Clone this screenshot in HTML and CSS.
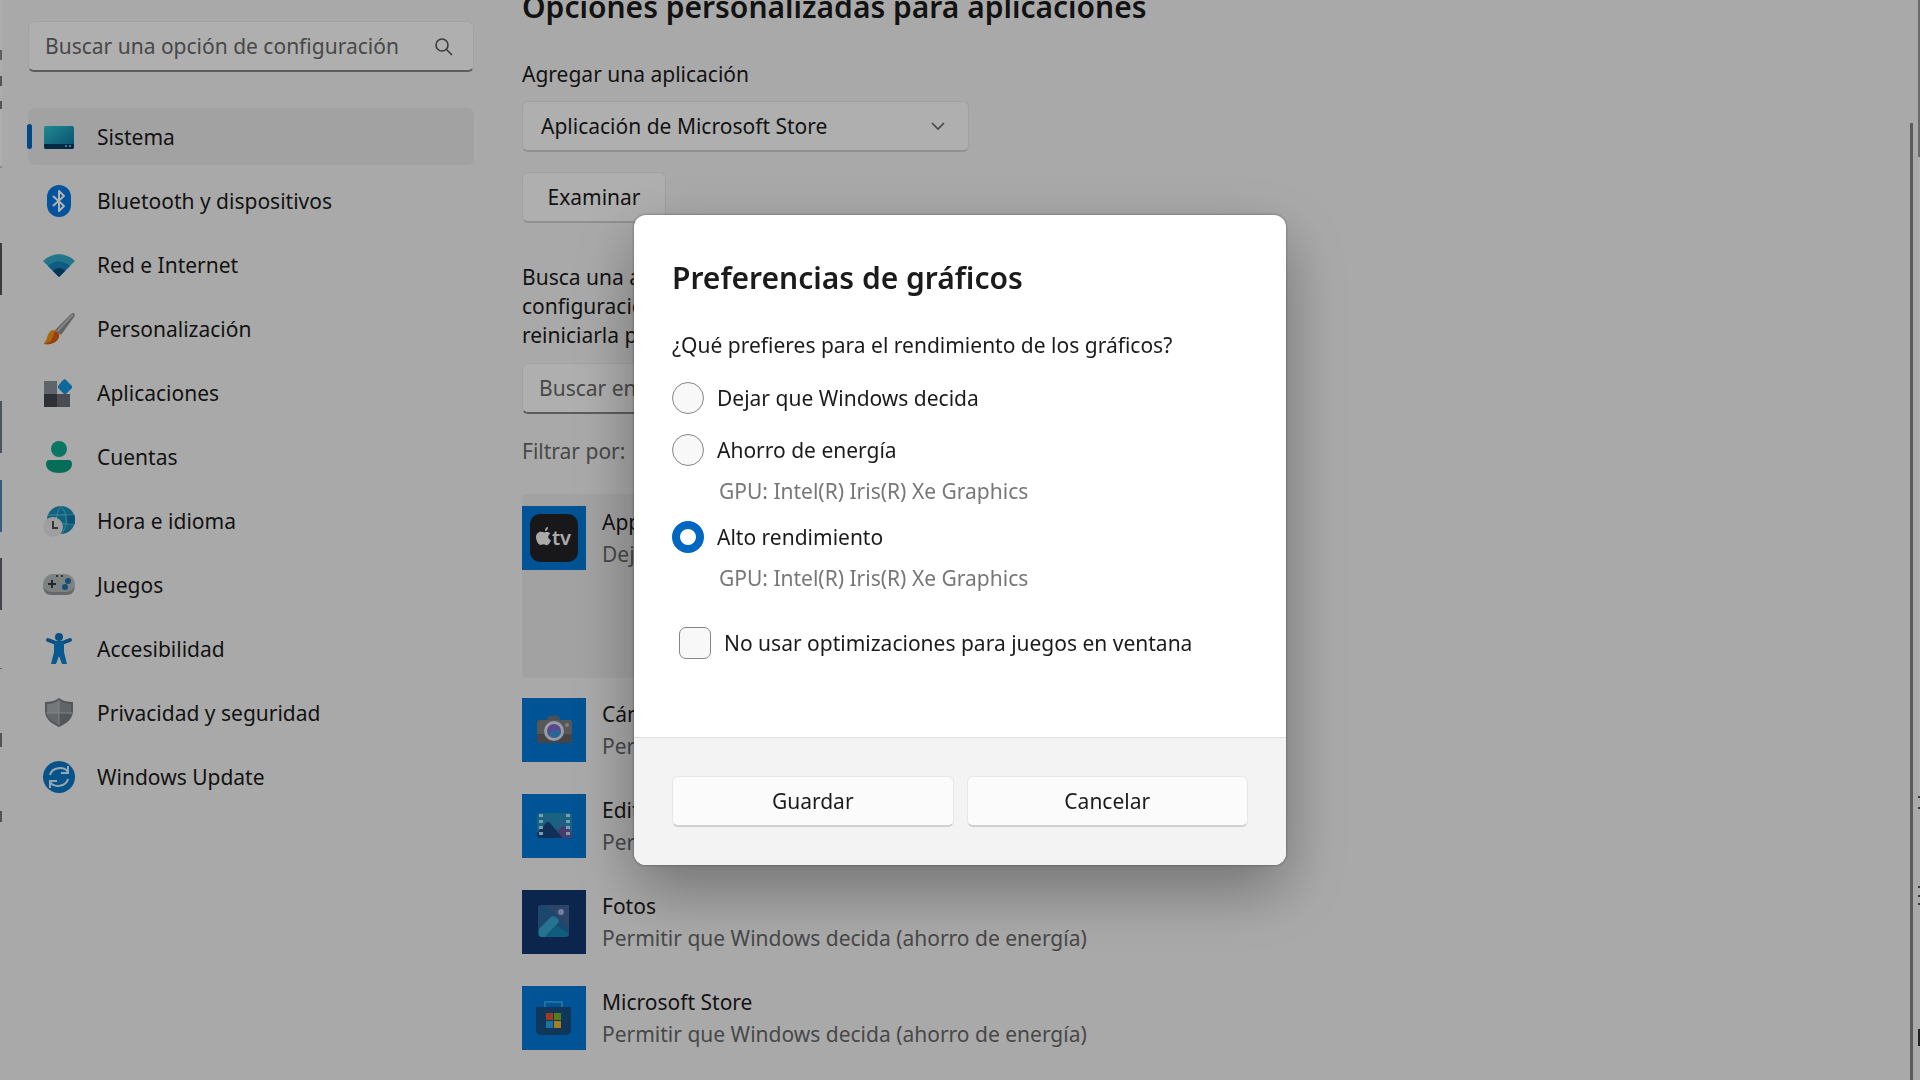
FILE: index.html
```html
<!DOCTYPE html>
<html lang="es">
<head>
<meta charset="utf-8">
<meta name="viewport" content="width=device-width, initial-scale=1">
<title>Configuración</title>
<link rel="stylesheet" href="styles.css">
</head>
<body>
<div class="window">
  <div class="edge edge-left"></div>
  <aside class="sidebar">
    <form class="search">
      <input class="search-input" type="search" aria-label="Buscar" placeholder="Buscar una opción de configuración">
      <svg class="search-icon" viewBox="0 0 20 20" fill="none" stroke="#555" stroke-width="1.600"><circle cx="8" cy="8" r="6"/><path d="M12.500 12.500 18 18"/></svg>
    </form>
    <nav class="nav">
      <a class="nav-item active" href="#"><svg class="icon" viewBox="0 0 32 32"><defs><linearGradient id="sys" x1="0" y1="0" x2="1" y2="1"><stop stop-color="#31c5cf"/><stop offset="1" stop-color="#086f9f"/></linearGradient></defs><rect x="1" y="5" width="30" height="23" rx="2" fill="url(#sys)"/><path d="M1 23h30v3a2 2 0 0 1-2 2H3a2 2 0 0 1-2-2z" fill="#063c64"/><path d="M22 25h2M26 25h2" stroke="#8cc9e8" stroke-width="1.500"/></svg>Sistema</a>
      <a class="nav-item" href="#"><svg class="icon" viewBox="0 0 32 32"><rect x="4" y="0" width="24" height="32" rx="12" fill="#0078e0"/><path d="M10 11l11 10-5 5V6l5 5-11 10" fill="none" stroke="#fff" stroke-width="2" stroke-linejoin="round"/></svg>Bluetooth y dispositivos</a>
      <a class="nav-item" href="#"><svg class="icon" viewBox="0 0 32 32"><path d="M0 12C9 3 23 3 32 12L16 28z" fill="#31a9c8"/><path d="M5 17C11 11 21 11 27 17L16 28z" fill="#1583bc"/><path d="M10 22C13 18 19 18 22 22L16 28z" fill="#074c7d"/></svg>Red e Internet</a>
      <a class="nav-item" href="#"><svg class="icon" viewBox="0 0 32 32"><path d="M30 0c2 0 2 2 1 4L18 22l-6-5L27 2c1-1 2-2 3-2z" fill="#8b8d8f"/><path d="M29 1 13 18l2 1L31 2z" fill="#b9bbbc"/><path d="M10 17c3 0 7 3 6 7-2 6-9 8-15 7 0-2 2-3 3-6 1-4 2-7 6-8z" fill="#ef9619"/><path d="M12 18 8 28 1 31c6 1 13-1 15-7 1-3-1-5-4-6z" fill="#d95b13"/></svg>Personalización</a>
      <a class="nav-item" href="#"><svg class="icon" viewBox="0 0 32 32"><path d="M1 4h13v13H1z" fill="#8a9097"/><path d="M1 17h13v13H1z" fill="#41464b"/><path d="M14 17h13v13H14z" fill="#686e77"/><path d="m20 3 2-1 7 7v2l-6 6h-2l-6-6V9z" fill="#1595dc"/></svg>Aplicaciones</a>
      <a class="nav-item" href="#"><svg class="icon" viewBox="0 0 32 32"><circle cx="16" cy="8" r="8" fill="#12a990"/><path d="M6 19h20c2 0 3 2 3 4 0 6-6 9-13 9S3 29 3 23c0-2 1-4 3-4z" fill="#0a9d80"/></svg>Cuentas</a>
      <a class="nav-item" href="#"><svg class="icon" viewBox="0 0 32 32"><circle cx="18" cy="15" r="14" fill="#168fb6"/><path d="M18 1c-6 7-6 20 0 28M18 1c7 8 7 21 0 28M5 10h26M5 19h27" fill="none" stroke="#62bddb" stroke-width="1"/><path d="M24 10h8v9h-7z" fill="#0664a8" opacity=".6"/><circle cx="10" cy="22" r="10" fill="#e4e4e4"/><path d="M10 16v7h5" fill="none" stroke="#4c4c4c" stroke-width="2"/></svg>Hora e idioma</a>
      <a class="nav-item" href="#"><svg class="icon" viewBox="0 0 32 32"><rect x="0" y="5" width="32" height="21" rx="10" fill="#b4babc"/><path d="M0 17c1 9 6 9 10 9h12c4 0 9 0 10-9-2 5-6 6-11 6H11C6 23 2 22 0 17z" fill="#8f9598"/><path d="M9 11v8M5 15h8" stroke="#34383b" stroke-width="2"/><circle cx="25" cy="12" r="3" fill="#236fa8"/><circle cx="22" cy="18" r="3" fill="#236fa8"/><path d="M13 7h2M18 7h2" stroke="#4a4d50" stroke-width="2"/></svg>Juegos</a>
      <a class="nav-item" href="#"><svg class="icon" viewBox="0 0 32 32"><circle cx="16" cy="4" r="4" fill="#0c73bd"/><path d="M5 7 13 10h6l8-3" fill="none" stroke="#0c73bd" stroke-width="4" stroke-linecap="round" stroke-linejoin="round"/><path d="M11 9h10v10l3 12h-5l-3-8-3 8H8l3-12z" fill="#0c80cd"/></svg>Accesibilidad</a>
      <a class="nav-item" href="#"><svg class="icon" viewBox="0 0 32 32"><path d="M16 1c4 3 9 4 14 4v9c0 8-7 13-14 16C9 27 2 22 2 14V5c5 0 10-1 14-4z" fill="#777d80"/><path d="M16 3v13H4V7c4 0 8-1 12-4z" fill="#a8adaf"/><path d="M16 3v13h12V7c-4 0-8-1-12-4z" fill="#8b9194"/><path d="M16 16v12C10 25 4 21 4 16z" fill="#8f9598"/><path d="M16 3v25M3 16h26" stroke="#b9bec0"/></svg>Privacidad y seguridad</a>
      <a class="nav-item" href="#"><svg class="icon" viewBox="0 0 32 32"><circle cx="16" cy="16" r="16" fill="#0877c5"/><path d="M7 14c2-8 14-9 18-3M25 18c-2 8-14 9-18 3M25 5v7h-7M7 27v-7h7" fill="none" stroke="#d9f0ff" stroke-width="2"/></svg>Windows Update</a>
    </nav>
  </aside>
  <main class="content">
    <h1 class="heading">Opciones personalizadas para aplicaciones</h1>
    <label class="field-label" for="kind">Agregar una aplicación</label>
    <div class="select-wrap">
      <select class="select" id="kind"><option>Aplicación de Microsoft Store</option><option>Aplicación de escritorio</option></select>
      <svg class="chevron" viewBox="0 0 16 16" fill="none" stroke="#666" stroke-width="1.600"><path d="m2 5 6 6 6-6"/></svg>
    </div>
    <button class="button browse" type="button">Examinar</button>
    <p class="hint">Busca una aplicación en la lista y cambia su<br>configuración de gráficos. Es posible que debas<br>reiniciarla para que se apliquen los cambios.</p>
    <input class="list-search" type="search" aria-label="Buscar en esta lista" placeholder="Buscar en esta lista">
    <p class="filter">Filtrar por:</p>
    <ul class="apps">
      <li class="app selected">
        <svg class="tile" viewBox="0 0 64 64"><path d="M0 0h64v64H0z" fill="#0078d4"/><rect x="8" y="8" width="48" height="48" rx="10" fill="#232326"/><path d="M23 25c0-2 1-4 3-4 0 2-1 4-3 4zm-3 1c2 0 2 1 4 0 2 0 4 0 4 2-3 2-2 5 1 6-1 3-3 6-5 5-2-1-3-1-5 0-3 0-5-5-5-8s3-6 6-5z" fill="#f4f4f4"/><text class="tv" x="30" y="39">tv</text></svg>
        <div><div class="app-name">Apple TV</div><div class="app-mode">Dejar que Windows decida</div></div>
      </li>
      <li class="app">
        <svg class="tile" viewBox="0 0 64 64"><path d="M0 0h64v64H0z" fill="#0078d4"/><path d="M26 19c0-2 10-2 11 0l2 4H24z" fill="#69747c"/><rect x="15" y="22" width="35" height="23" rx="3" fill="#7d7d80"/><path d="M15 36h35v6a3 3 0 0 1-3 3H18a3 3 0 0 1-3-3z" fill="#646468"/><circle cx="32" cy="33" r="10" fill="#dcdfed"/><circle cx="32" cy="33" r="7" fill="#8068cb"/><path d="M27 36c3-5 7-5 12-2-1 5-8 9-12 2z" fill="#3c94dc"/><circle cx="45" cy="27" r="2" fill="#b4b4b7"/></svg>
        <div><div class="app-name">Cámara</div><div class="app-mode">Permitir que Windows decida</div></div>
      </li>
      <li class="app">
        <svg class="tile" viewBox="0 0 64 64"><path d="M0 0h64v64H0z" fill="#0078d4"/><rect x="15" y="19" width="35" height="25" rx="3" fill="#278bbb"/><path d="m15 39 9-10q2-2 4 0l13 15H18q-3 0-3-3z" fill="#16477f"/><path d="m35 37 5-5q2-1 4 1l6 5v3q0 3-3 3h-6z" fill="#68569e"/><path d="M19 20v24M46 20v24" stroke="#a8e4fb" stroke-width="4" stroke-dasharray="3 3"/></svg>
        <div><div class="app-name">Editor de vídeo</div><div class="app-mode">Permitir que Windows decida</div></div>
      </li>
      <li class="app">
        <svg class="tile" viewBox="0 0 64 64"><path d="M0 0h64v64H0z" fill="#12366f"/><rect x="16" y="15" width="31" height="32" rx="3" fill="#27679b"/><path d="M25 15h22v23z" fill="#426396"/><path d="m17 39 12-12q3-2 6 1 3 2 1 5L23 47h-4q-3-1-2-8z" fill="#35a5cf"/><path d="m24 47 11-12 12 9q-1 3-4 3z" fill="#1785b7"/><circle cx="39" cy="22" r="3" fill="#a6b7f0"/></svg>
        <div><div class="app-name">Fotos</div><div class="app-mode">Permitir que Windows decida (ahorro de energía)</div></div>
      </li>
      <li class="app">
        <svg class="tile" viewBox="0 0 64 64"><path d="M0 0h64v64H0z" fill="#0078d4"/><path d="M23 22v-6h17v6" fill="none" stroke="#2aa3df" stroke-width="2"/><path d="M14 21h35v22q0 6-6 6H20q-6 0-6-6z" fill="#174f82"/><path d="M24 27h7v7h-7z" fill="#e75132"/><path d="M32 27h7v7h-7z" fill="#79b52b"/><path d="M24 35h7v7h-7z" fill="#27a5e6"/><path d="M32 35h7v7h-7z" fill="#f0b52c"/></svg>
        <div><div class="app-name">Microsoft Store</div><div class="app-mode">Permitir que Windows decida (ahorro de energía)</div></div>
      </li>
    </ul>
  </main>
  <div class="scrollbar"></div>
  <div class="edge edge-right"></div>
</div>

<div class="scrim">
  <form class="dialog" role="dialog" aria-labelledby="dialog-title">
    <div class="dialog-body">
      <h2 class="dialog-title" id="dialog-title">Preferencias de gráficos</h2>
      <fieldset class="options">
        <legend class="question">¿Qué prefieres para el rendimiento de los gráficos?</legend>
        <label class="choice"><input class="radio" type="radio" name="gpu">Dejar que Windows decida</label>
        <label class="choice"><input class="radio" type="radio" name="gpu">Ahorro de energía</label>
        <p class="gpu">GPU: Intel(R) Iris(R) Xe Graphics</p>
        <label class="choice"><input class="radio" type="radio" name="gpu" checked>Alto rendimiento</label>
        <p class="gpu">GPU: Intel(R) Iris(R) Xe Graphics</p>
      </fieldset>
      <label class="choice optimize"><input class="checkbox" type="checkbox">No usar optimizaciones para juegos en ventana</label>
    </div>
    <div class="dialog-footer">
      <button class="button" type="button">Guardar</button>
      <button class="button" type="button">Cancelar</button>
    </div>
  </form>
</div>
</body>
</html>
```
FILE: styles.css
```css
* { box-sizing: border-box; }

body {
  margin: 0;
  height: 100vh;
  overflow: hidden;
  background: #f3f3f3;
  color: #1b1b1b;
  font: 21px/32px "Noto Sans", "Open Sans", sans-serif;
}

input, select, button { font: inherit; color: inherit; }
h1, h2, p, ul, fieldset { margin: 0; padding: 0; border: 0; }
legend { padding: 0; }

.window { display: flex; height: 100%; overflow: hidden; }

/* Strips of the windows that lie behind this one */
.edge { flex: none; width: 2px; }
.edge-left {
  background: linear-gradient(#f6f6f6 50px, #888 50px 60px, #f6f6f6 60px 76px, #777 76px 86px, #f6f6f6 86px 101px, #777 101px 109px, #fbfbfb 109px 166px, #ccc 166px 168px, #f3f3f3 168px 243px, #555 243px 295px, #f3f3f3 295px 401px, #6b7787 401px 453px, #f3f3f3 453px 480px, #4d82b5 480px 532px, #f3f3f3 532px 558px, #606070 558px 610px, #f3f3f3 610px 668px, #888 668px 669px, #f3f3f3 669px 733px, #777 733px 747px, #f3f3f3 747px 811px, #777 811px 822px, #f3f3f3 822px);
}
.edge-right {
  background: linear-gradient(#999 157px, #f8f8f8 157px 796px, #555 796px 798px, #f3f3f3 798px 807px, #555 807px 809px, #f3f3f3 809px 886px, #555 886px 888px, #f3f3f3 888px 895px, #555 895px 897px, #f3f3f3 897px 903px, #555 903px 905px, #f3f3f3 905px 1029px, #333 1029px 1046px, #f3f3f3 1046px);
}

.sidebar { flex: none; width: 472px; padding: 21px 0 0 26px; }

.search { position: relative; margin-bottom: 36px; }
.search-input, .list-search {
  display: block;
  width: 100%;
  height: 51px;
  padding: 0 16px;
  border: 1px solid #e8e8e8;
  border-bottom: 2px solid #858585;
  border-radius: 6px;
  background: #fbfbfb;
}
.search-input::placeholder, .list-search::placeholder { color: #686868; opacity: 1; }
.search-icon { position: absolute; right: 20px; top: 16px; width: 20px; height: 20px; }

.nav { display: flex; flex-direction: column; gap: 7px; }
.nav-item {
  position: relative;
  display: flex;
  align-items: center;
  gap: 22px;
  height: 57px;
  padding-left: 15px;
  border-radius: 6px;
  color: inherit;
  text-decoration: none;
}
.nav-item.active { background: #e9e9e9; }
.nav-item.active::before {
  content: "";
  position: absolute;
  left: -1px;
  top: 16px;
  width: 5px;
  height: 25px;
  border-radius: 3px;
  background: #0067c0;
}
.icon { width: 32px; height: 32px; }

.content { flex: 1; min-width: 0; margin-top: -13px; padding-left: 48px; }
.heading { margin-bottom: 31px; font-size: 30px; line-height: 40px; font-weight: 600; }
.field-label { display: block; margin-bottom: 11px; }

.select-wrap { position: relative; width: 447px; margin-bottom: 20px; }
.select {
  display: block;
  width: 100%;
  height: 51px;
  padding: 0 18px;
  appearance: none;
  border: 1px solid #e6e6e6;
  border-bottom: 2px solid #d0d0d0;
  border-radius: 6px;
  background: #fbfbfb;
}
.chevron { position: absolute; right: 23px; top: 17px; width: 16px; height: 16px; }

.button {
  height: 51px;
  padding: 0 24px;
  border: 1px solid #e6e6e6;
  border-bottom: 2px solid #d0d0d0;
  border-radius: 6px;
  background: #fbfbfb;
}
.browse { display: block; width: 144px; margin-bottom: 40px; }

.hint { margin-bottom: 13px; line-height: 29px; }
.list-search { width: 447px; margin-bottom: 21px; }
.filter { margin-bottom: 27px; color: #686868; }

.apps { display: flex; flex-direction: column; gap: 8px; width: 720px; list-style: none; }
.app { display: flex; gap: 16px; padding: 12px 0; border-radius: 6px; }
.app.selected { min-height: 184px; background: #e9e9e9; }
.app-mode { color: #686868; }
.tile { flex: none; width: 64px; height: 64px; }
.tv { font: 600 20px "Noto Sans", sans-serif; fill: #f4f4f4; }

.scrollbar { flex: none; width: 3px; margin: 123px 5px 0 0; background: #828382; }

.scrim {
  position: fixed;
  inset: 0;
  display: flex;
  align-items: center;
  justify-content: center;
  background: rgba(0, 0, 0, .3);
}
.dialog {
  width: 652px;
  overflow: hidden;
  border-radius: 12px;
  background: #fff;
  box-shadow: 0 0 3px rgba(0, 0, 0, .4), 0 24px 64px rgba(0, 0, 0, .34);
}
.dialog-body { padding: 43px 38px 68px; }
.dialog-title { margin-bottom: 31px; font-size: 30px; line-height: 40px; font-weight: 600; }
.question { margin-bottom: 16px; }
.choice { display: flex; align-items: center; gap: 13px; min-height: 52px; }
.options .choice { padding-bottom: 10px; }
.gpu { margin: -6px 0 9px 47px; color: #777; }

.radio, .checkbox {
  appearance: none;
  flex: none;
  width: 32px;
  height: 32px;
  margin: 0;
  border: 1px solid #858585;
  background: #f8f8f8;
}
.radio { border-radius: 50%; }
.radio:checked { border: 8px solid #0067c0; background: #fff; }
.checkbox { border-radius: 7px; }
.optimize { margin-top: 14px; padding-left: 7px; }

.dialog-footer {
  display: grid;
  grid-template-columns: 1fr 1fr;
  gap: 13px;
  padding: 38px;
  border-top: 1px solid #dfdfdf;
  background: #f3f3f3;
}
```
